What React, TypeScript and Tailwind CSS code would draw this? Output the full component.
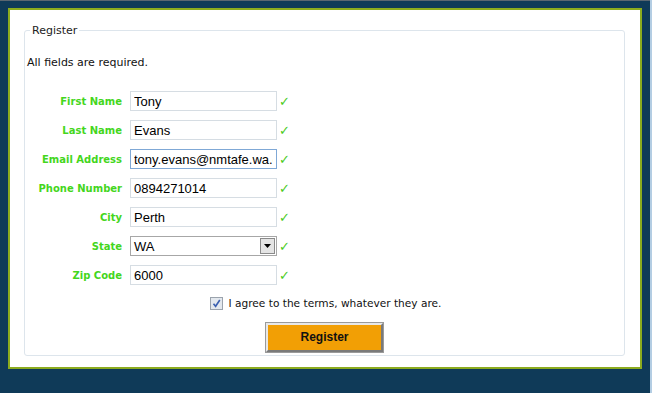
import React from "react";

const fields = [
  { label: "First Name", value: "Tony" },
  { label: "Last Name", value: "Evans" },
  { label: "Email Address", value: "tony.evans@nmtafe.wa.edu.au", focus: true },
  { label: "Phone Number", value: "0894271014" },
  { label: "City", value: "Perth" },
  { label: "State", value: "WA", select: true },
  { label: "Zip Code", value: "6000" },
];

const Check = () => (
  <span className="ml-[2px] text-[13px] leading-none text-[#4ccb22] font-['DejaVu_Sans',sans-serif]">✓</span>
);

export default function App() {
  return (
    <div className="flex w-[652px] font-['DejaVu_Sans',sans-serif]">
      <div className="w-[650px] bg-[#0f3a58] border-t border-[#5a6670] pt-[7px] pl-2 pr-2 pb-[23px]">
        <div className="h-[361px] bg-white border-2 border-[#8cab1e] pl-[14px] pr-[15px] pt-[14px] pb-[11px]">
          <fieldset className="h-full rounded-[3px] border border-[#dde5ec] px-[2px]">
            <legend className="ml-[3px] px-[2px] text-[11px] leading-[13px] text-[#222]">Register</legend>
            <p className="mt-[19px] text-[11px] leading-[13px] text-[#111]">All fields are required.</p>
            <div className="mt-[22px] flex flex-col gap-[9px]">
              {fields.map((f) => (
                <div key={f.label} className="flex items-center h-[20px]">
                  <label className="w-[95px] mr-[8px] text-right text-[10px] font-bold text-[#44d61c]">
                    {f.label}
                  </label>
                  {f.select ? (
                    <div className="flex h-[20px] w-[147px] items-center border border-[#a7a7a7] bg-white">
                      <span className="flex-1 pl-[3px] text-[13px] leading-none text-black font-['Liberation_Sans',sans-serif]">
                        {f.value}
                      </span>
                      <span className="mr-[1px] flex h-[16px] w-[15px] items-center justify-center border border-[#8a8a8a] bg-[#e4e4e4]">
                        <svg width="7" height="4" viewBox="0 0 7 4">
                          <path d="M0 0h7L3.5 4z" fill="#000" />
                        </svg>
                      </span>
                    </div>
                  ) : (
                    <input
                      readOnly
                      value={f.value}
                      className={
                        "h-[20px] w-[147px] border bg-white px-[3px] text-[13px] text-black outline-none font-['Liberation_Sans',sans-serif] " +
                        (f.focus ? "border-[#7fa8d6]" : "border-[#d6dde3]")
                      }
                    />
                  )}
                  <Check />
                </div>
              ))}
            </div>
            <div className="mt-[11px] flex items-center justify-center pl-[2px]">
              <span className="flex h-[13px] w-[13px] items-center justify-center border border-[#9ba3ad] bg-[#e3e8ee]">
                <svg width="9" height="9" viewBox="0 0 9 9">
                  <path d="M1.5 4.8 3.6 7.3 7.8 1" fill="none" stroke="#3a5fb0" strokeWidth="1.6" />
                </svg>
              </span>
              <span className="ml-[6px] text-[10.6px] text-[#111]">I agree to the terms, whatever they are.</span>
            </div>
            <div className="mt-[11px] flex justify-center">
              <button className="h-[29px] w-[117px] border-2 border-t-[#e8e8e8] border-l-[#e8e8e8] border-r-[#7a7a7a] border-b-[#7a7a7a] bg-[#f29f05] outline outline-1 outline-[#9a9a9a] text-[12px] font-bold text-[#111] font-['Liberation_Sans',sans-serif]">
                Register
              </button>
            </div>
          </fieldset>
        </div>
      </div>
      <div className="w-[2px] h-[393px] bg-[#b3cde3]" />
    </div>
  );
}
